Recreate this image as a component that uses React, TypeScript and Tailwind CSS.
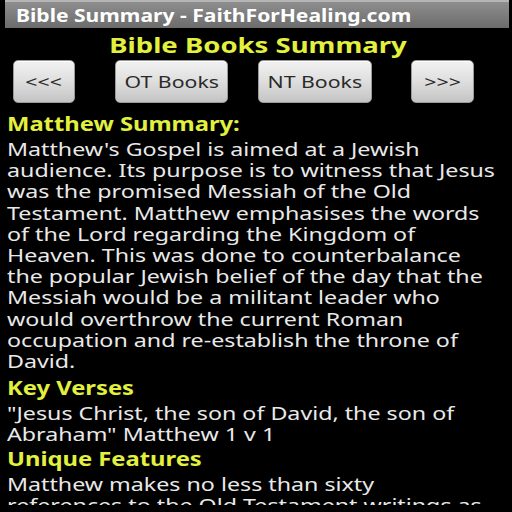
const font = { fontFamily: '"Noto Sans", "Open Sans", sans-serif' };

const summary = [
  "Matthew's Gospel is aimed at a Jewish",
  "audience. Its purpose is to witness that Jesus",
  "was the promised Messiah of the Old",
  "Testament. Matthew emphasises the words",
  "of the Lord regarding the Kingdom of",
  "Heaven. This was done to counterbalance",
  "the popular Jewish belief of the day that the",
  "Messiah would be a militant leader who",
  "would overthrow the current Roman",
  "occupation and re-establish the throne of",
  "David.",
];

const verses = ['"Jesus Christ, the son of David, the son of', 'Abraham" Matthew 1 v 1'];

const features = ["Matthew makes no less than sixty", "references to the Old Testament writings as"];

// the screen text is drawn wide, so labels get a horizontal stretch
function NavButton({ label, w, className = "" }: { label: string; w: string; className?: string }) {
  return (
    <button
      className={`${w} ${className} flex h-[43px] shrink-0 items-center justify-center rounded-[5px] border border-[#9a9a9a] bg-gradient-to-b from-[#f2f2f2] via-[#dedede] to-[#c4c4c4] text-[17px] text-[#2a2a2a] shadow-[inset_0_1px_0_#ffffff]`}
    >
      <span className="scale-x-[1.25] whitespace-nowrap">{label}</span>
    </button>
  );
}

function Heading({ children, className = "pt-[4px] pb-[4px]" }: { children: React.ReactNode; className?: string }) {
  return (
    <p className={`${className} w-max origin-left scale-x-[1.25] text-[19px] font-bold leading-[21px] text-[#e2f03e]`}>
      {children}
    </p>
  );
}

function Lines({ lines }: { lines: string[] }) {
  return (
    <div>
      {lines.map((l) => (
        <p key={l} className="w-max origin-left scale-x-[1.29] whitespace-nowrap">
          {l}
        </p>
      ))}
    </div>
  );
}

export default function App() {
  return (
    <div className="h-[512px] w-[512px] overflow-hidden bg-black" style={font}>
      <div className="ml-[5px] mr-[3px] flex h-[28px] items-center border-t-2 border-[#b5b5b5] bg-gradient-to-b from-[#8e8e8e] to-[#6c6c6c] px-[11px]">
        <span className="origin-left scale-x-[1.24] whitespace-nowrap text-[17px] font-bold leading-none text-white">
          Bible Summary - FaithForHealing.com
        </span>
      </div>
      <div className="mt-[2px] flex justify-center pl-[4px]">
        <h1 className="scale-x-[1.25] whitespace-nowrap text-[22px] font-bold leading-[28px] text-[#e2f03e]">
          Bible Books Summary
        </h1>
      </div>
      <div className="mt-[2px] flex items-center pl-[13px]">
        <NavButton label="<<<" w="w-[62px]" />
        <NavButton label="OT Books" w="w-[113px]" className="ml-[40px]" />
        <NavButton label="NT Books" w="w-[114px]" className="ml-[30px]" />
        <NavButton label=">>>" w="w-[63px]" className="ml-[39px]" />
      </div>
      <div className="mt-[7px] h-[395px] overflow-hidden px-[7px] text-[18px] leading-[21.2px] text-[#e9e9e9]">
        <Heading>Matthew Summary:</Heading>
        <Lines lines={summary} />
        <Heading className="pt-[6px] pb-[4px]">Key Verses</Heading>
        <Lines lines={verses} />
        <Heading className="pt-[3px] pb-[4px]">Unique Features</Heading>
        <Lines lines={features} />
      </div>
    </div>
  );
}
